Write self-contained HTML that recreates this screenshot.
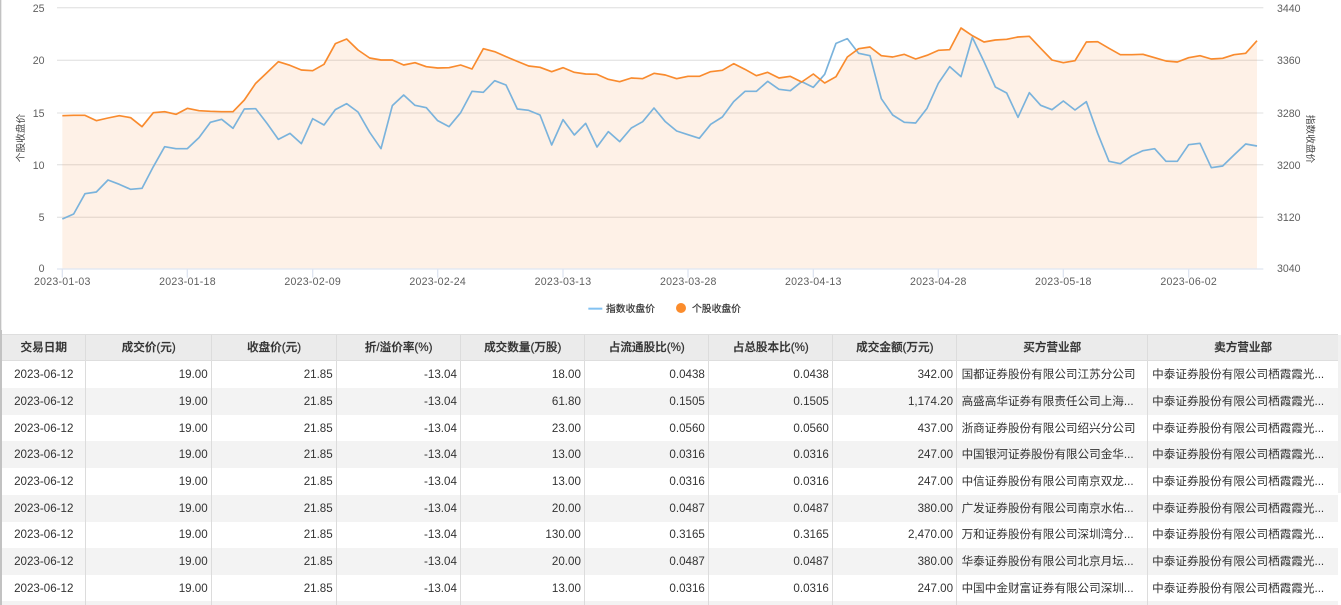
<!DOCTYPE html>
<html lang="zh-CN"><head><meta charset="utf-8"><title>大宗交易</title>
<style>
html,body{margin:0;padding:0;background:#fff;width:1341px;height:605px;overflow:hidden}
body{position:relative;font-family:"Liberation Sans","Noto Sans CJK SC",sans-serif}
svg.c{position:absolute;left:0;top:0}
.y,.x,.t,.l{position:absolute;white-space:nowrap;color:#5f5f5f;font-size:10.6px;line-height:12px}
.y{height:12px}
.yl{left:0;width:44.5px;text-align:right}
.yr{left:1277px}
.x{width:80px;text-align:center;top:276px;letter-spacing:.25px}
.t{font-size:9.7px;transform-origin:center;width:60px;height:12px;text-align:center;color:#444;font-family:"Noto Sans CJK SC","Liberation Sans",sans-serif}
.l{top:302px;font-size:9.8px;color:#333;-webkit-text-stroke:.2px #333;font-family:"Noto Sans CJK SC",sans-serif}
.r{position:absolute;left:2px;width:1336px;height:27px;display:grid;grid-template-columns:84px 125.8px 125px 124.2px 124px 124px 124px 124.2px 190.6px 190.2px;font-size:11.6px;color:#333;line-height:27.5px;box-sizing:border-box}
.r div{border-right:1px solid #dcdcdc;padding:0 3.1px 0 3.6px;text-align:right;white-space:nowrap;overflow:hidden;box-sizing:border-box}
.r div:first-child{text-align:center}
.r div.a{text-align:left;padding-left:4.4px;font-family:"Liberation Sans","Noto Sans CJK SC",sans-serif}
.r div:last-child{border-right:0}
.s{background:#f3f3f3}
.h{background:#ebebeb;height:27px;top:334px;border-top:1px solid #dedede;border-bottom:1px solid #dedede;color:#333;line-height:25px}
.h div,.h div:first-child,.h div.a{text-align:center;font-weight:500;-webkit-text-stroke:.25px #333;font-family:"Liberation Sans","Noto Sans CJK SC",sans-serif}
</style></head><body>
<svg class="c" width="1341" height="330" viewBox="0 0 4023 990" fill="none">
<rect x="0" y="0" width="4" height="990" fill="#c2c2c2"/>
<g stroke="#e6e6e6" stroke-width="4">
<path d="M171 23H3790M171 181H3790M171 339H3790M171 494H3790M171 652H3790"/>
</g>
<polygon fill="rgb(251,155,84)" fill-opacity=".14" points="187,806 187,347 221,346 255,346 289,362 324,354 358,347 392,353 426,380 460,338 494,335 528,343 562,325 597,332 631,334 665,335 699,335 733,300 767,250 801,218 835,185 870,196 904,210 938,212 972,193 1006,131 1040,117 1074,150 1109,174 1143,180 1177,180 1211,195 1245,188 1279,200 1313,204 1347,203 1382,195 1416,207 1450,146 1484,155 1518,170 1552,184 1586,198 1620,202 1655,215 1689,203 1723,217 1757,222 1791,223 1825,238 1859,245 1894,234 1928,236 1962,220 1996,225 2030,236 2064,229 2098,229 2132,215 2167,211 2201,191 2235,208 2269,227 2303,217 2337,234 2371,229 2405,246 2440,222 2474,249 2508,230 2542,171 2576,146 2610,141 2644,167 2678,171 2713,163 2747,177 2781,166 2815,151 2849,149 2883,84 2917,107 2952,126 2986,120 3020,118 3054,111 3088,109 3122,145 3156,180 3190,188 3225,182 3259,126 3293,125 3327,145 3361,164 3395,164 3429,163 3464,173 3498,183 3532,186 3566,173 3600,167 3634,177 3668,175 3702,164 3737,160 3771,122 3771,806"/>
<g stroke="#dfe5f1" stroke-width="4">
<path d="M171 807H3790"/>
<path d="M187 807V833M562 807V833M938 807V833M1313 807V833M1689 807V833M2064 807V833M2440 807V833M2815 807V833M3190 807V833M3566 807V833"/>
</g>
<polyline stroke="#7ab3dc" stroke-width="5" stroke-linejoin="round" points="187,657 221,642 255,581 289,576 324,540 358,553 392,568 426,565 460,500 494,440 528,446 562,446 597,413 631,367 665,358 699,385 733,327 767,326 801,370 835,418 870,400 904,431 938,356 972,375 1006,329 1040,311 1074,336 1109,397 1143,446 1177,317 1211,285 1245,316 1279,323 1313,362 1347,380 1382,338 1416,274 1450,277 1484,242 1518,255 1552,327 1586,331 1620,345 1655,435 1689,359 1723,405 1757,370 1791,441 1825,395 1859,425 1894,384 1928,365 1962,324 1996,365 2030,393 2064,404 2098,415 2132,373 2167,351 2201,305 2235,274 2269,274 2303,244 2337,268 2371,272 2405,245 2440,262 2474,223 2508,130 2542,116 2576,160 2610,167 2644,296 2678,345 2713,367 2747,369 2781,325 2815,250 2849,200 2883,230 2917,112 2952,185 2986,261 3020,279 3054,352 3088,278 3122,316 3156,329 3190,303 3225,330 3259,305 3293,400 3327,484 3361,491 3395,468 3429,452 3464,446 3498,484 3532,484 3566,434 3600,430 3634,503 3668,498 3702,465 3737,432 3771,438"/>
<polyline stroke="#f98b2e" stroke-width="5" stroke-linejoin="round" points="187,347 221,346 255,346 289,362 324,354 358,347 392,353 426,380 460,338 494,335 528,343 562,325 597,332 631,334 665,335 699,335 733,300 767,250 801,218 835,185 870,196 904,210 938,212 972,193 1006,131 1040,117 1074,150 1109,174 1143,180 1177,180 1211,195 1245,188 1279,200 1313,204 1347,203 1382,195 1416,207 1450,146 1484,155 1518,170 1552,184 1586,198 1620,202 1655,215 1689,203 1723,217 1757,222 1791,223 1825,238 1859,245 1894,234 1928,236 1962,220 1996,225 2030,236 2064,229 2098,229 2132,215 2167,211 2201,191 2235,208 2269,227 2303,217 2337,234 2371,229 2405,246 2440,222 2474,249 2508,230 2542,171 2576,146 2610,141 2644,167 2678,171 2713,163 2747,177 2781,166 2815,151 2849,149 2883,84 2917,107 2952,126 2986,120 3020,118 3054,111 3088,109 3122,145 3156,180 3190,188 3225,182 3259,126 3293,125 3327,145 3361,164 3395,164 3429,163 3464,173 3498,183 3532,186 3566,173 3600,167 3634,177 3668,175 3702,164 3737,160 3771,122"/>
<path d="M1765 926H1807" stroke="#82c2f2" stroke-width="6"/>
<circle cx="2043" cy="924" r="15" fill="#fb8c2c"/>
</svg>
<div class="y yl" style="top:3px">25</div><div class="y yl" style="top:55px">20</div><div class="y yl" style="top:108px">15</div><div class="y yl" style="top:160px">10</div><div class="y yl" style="top:212px">5</div><div class="y yl" style="top:263px">0</div>
<div class="y yr" style="top:3px">3440</div><div class="y yr" style="top:55px">3360</div><div class="y yr" style="top:108px">3280</div><div class="y yr" style="top:160px">3200</div><div class="y yr" style="top:212px">3120</div><div class="y yr" style="top:263px">3040</div>
<div class="x" style="left:22.3px">2023-01-03</div><div class="x" style="left:147.5px">2023-01-18</div><div class="x" style="left:272.7px">2023-02-09</div><div class="x" style="left:397.7px">2023-02-24</div><div class="x" style="left:523px">2023-03-13</div><div class="x" style="left:648.3px">2023-03-28</div><div class="x" style="left:773.3px">2023-04-13</div><div class="x" style="left:898.3px">2023-04-28</div><div class="x" style="left:1023.3px">2023-05-18</div><div class="x" style="left:1148.7px">2023-06-02</div>
<div class="t" style="left:-10px;top:132px;transform:rotate(-90deg)">个股收盘价</div>
<div class="t" style="left:1281px;top:133px;transform:rotate(90deg)">指数收盘价</div>
<div class="l" style="left:606px">指数收盘价</div><div class="l" style="left:692px">个股收盘价</div>

<div class="r" style="top:361px"><div>2023-06-12</div><div>19.00</div><div>21.85</div><div>-13.04</div><div>18.00</div><div>0.0438</div><div>0.0438</div><div>342.00</div><div class="a">国都证券股份有限公司江苏分公司</div><div class="a">中泰证券股份有限公司栖霞霞光...</div></div>
<div class="r s" style="top:388px"><div>2023-06-12</div><div>19.00</div><div>21.85</div><div>-13.04</div><div>61.80</div><div>0.1505</div><div>0.1505</div><div>1,174.20</div><div class="a">高盛高华证券有限责任公司上海...</div><div class="a">中泰证券股份有限公司栖霞霞光...</div></div>
<div class="r" style="top:415px"><div>2023-06-12</div><div>19.00</div><div>21.85</div><div>-13.04</div><div>23.00</div><div>0.0560</div><div>0.0560</div><div>437.00</div><div class="a">浙商证券股份有限公司绍兴分公司</div><div class="a">中泰证券股份有限公司栖霞霞光...</div></div>
<div class="r s" style="top:441px"><div>2023-06-12</div><div>19.00</div><div>21.85</div><div>-13.04</div><div>13.00</div><div>0.0316</div><div>0.0316</div><div>247.00</div><div class="a">中国银河证券股份有限公司金华...</div><div class="a">中泰证券股份有限公司栖霞霞光...</div></div>
<div class="r" style="top:468px"><div>2023-06-12</div><div>19.00</div><div>21.85</div><div>-13.04</div><div>13.00</div><div>0.0316</div><div>0.0316</div><div>247.00</div><div class="a">中信证券股份有限公司南京双龙...</div><div class="a">中泰证券股份有限公司栖霞霞光...</div></div>
<div class="r s" style="top:495px"><div>2023-06-12</div><div>19.00</div><div>21.85</div><div>-13.04</div><div>20.00</div><div>0.0487</div><div>0.0487</div><div>380.00</div><div class="a">广发证券股份有限公司南京水佑...</div><div class="a">中泰证券股份有限公司栖霞霞光...</div></div>
<div class="r" style="top:521px"><div>2023-06-12</div><div>19.00</div><div>21.85</div><div>-13.04</div><div>130.00</div><div>0.3165</div><div>0.3165</div><div>2,470.00</div><div class="a">万和证券股份有限公司深圳湾分...</div><div class="a">中泰证券股份有限公司栖霞霞光...</div></div>
<div class="r s" style="top:548px"><div>2023-06-12</div><div>19.00</div><div>21.85</div><div>-13.04</div><div>20.00</div><div>0.0487</div><div>0.0487</div><div>380.00</div><div class="a">华泰证券股份有限公司北京月坛...</div><div class="a">中泰证券股份有限公司栖霞霞光...</div></div>
<div class="r" style="top:575px"><div>2023-06-12</div><div>19.00</div><div>21.85</div><div>-13.04</div><div>13.00</div><div>0.0316</div><div>0.0316</div><div>247.00</div><div class="a">中国中金财富证券有限公司深圳...</div><div class="a">中泰证券股份有限公司栖霞霞光...</div></div>
<div class="r s" style="top:601px"><div></div><div></div><div></div><div></div><div></div><div></div><div></div><div></div><div></div><div></div></div>
<div class="r h"><div>交易日期</div><div>成交价(元)</div><div>收盘价(元)</div><div>折/溢价率(%)</div><div>成交数量(万股)</div><div>占流通股比(%)</div><div>占总股本比(%)</div><div>成交金额(万元)</div><div>买方营业部</div><div>卖方营业部</div></div>
<div style="position:absolute;left:0;top:330px;width:1.5px;height:275px;background:#c2c2c2"></div>
<div style="position:absolute;left:1338px;top:335px;width:3px;height:158px;background:#f1f1f1"></div>
</body></html>
